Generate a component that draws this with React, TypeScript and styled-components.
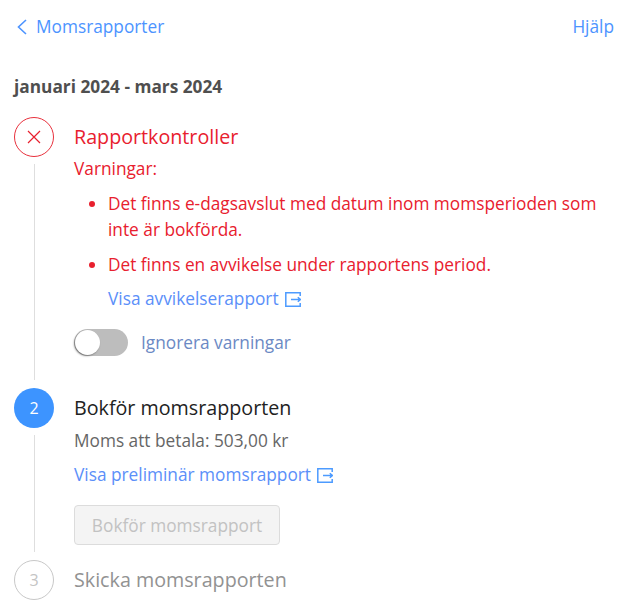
import React from 'react';
import styled, { createGlobalStyle } from 'styled-components';

const GlobalStyle = createGlobalStyle`
  html, body {
    margin: 0;
    padding: 0;
    background: #fff;
    font-family: "Open Sans", "Liberation Sans", sans-serif;
    font-size: 17.28px;
  }
`;

const Page = styled.div`
  width: 625px;
  height: 609px;
  overflow: hidden;
  box-sizing: border-box;
  padding: 16px 11px 0 14px;
`;

const TopBar = styled.div`
  display: flex;
  justify-content: space-between;
  align-items: center;
  height: 22px;
`;

const BackLink = styled.a`
  display: flex;
  align-items: center;
  gap: 9px;
  color: #4d94ff;
  margin-left: 3px;
  line-height: 22px;
`;

const HelpLink = styled.a`
  color: #4d94ff;
  line-height: 22px;
`;

const Period = styled.h2`
  margin: 38px 0 0;
  font-size: 17.28px;
  line-height: 22px;
  font-weight: 700;
  color: #4f4f4f;
`;

const StepList = styled.div`
  display: flex;
  flex-direction: column;
  margin-top: 19px;
`;

const Step = styled.section`
  display: flex;
  gap: 20px;
`;

const Rail = styled.div`
  display: flex;
  flex-direction: column;
  align-items: center;
  width: 40px;
  flex: none;
`;

type BadgeKind = 'error' | 'active' | 'pending';

const Badge = styled.div<{ $kind: BadgeKind }>`
  width: 40px;
  height: 40px;
  flex: none;
  box-sizing: border-box;
  border-radius: 50%;
  display: flex;
  align-items: center;
  justify-content: center;
  font-size: 16px;
  background: ${p => (p.$kind === 'active' ? '#3d94ff' : '#fff')};
  color: ${p => (p.$kind === 'active' ? '#fff' : p.$kind === 'error' ? '#e8202e' : '#c4c4c4')};
  border: ${p =>
    p.$kind === 'error' ? '1px solid #e8303c' : p.$kind === 'pending' ? '1px solid #c8c8c8' : 'none'};
`;

const RailLine = styled.div`
  flex: 1;
  width: 1px;
  background: #dedede;
  margin: 7px 0 8px;
`;

const StepBody = styled.div`
  flex: 1;
  min-width: 0;
  padding-top: 8px;
`;

const StepTitle = styled.h3<{ $tone: 'error' | 'dark' | 'muted' }>`
  margin: 0;
  font-size: 19.7px;
  line-height: 24px;
  font-weight: 400;
  color: ${p => (p.$tone === 'error' ? '#e8202e' : p.$tone === 'dark' ? '#222' : '#929292')};
`;

const WarningLabel = styled.div`
  margin-top: 9px;
  line-height: 22px;
  color: #e8202e;
`;

const WarningList = styled.ul`
  margin: 11px 0 0;
  padding: 0 0 0 34px;
  color: #e8202e;
  line-height: 26px;

  li + li {
    margin-top: 9px;
  }
`;

const ReportLink = styled.a<{ $indented?: boolean }>`
  display: flex;
  align-items: center;
  gap: 6px;
  width: fit-content;
  color: #5b8ff9;
  line-height: 22px;
  margin-left: ${p => (p.$indented ? '34px' : '0')};
  margin-top: ${p => (p.$indented ? '10px' : '12px')};
`;

const ToggleRow = styled.div`
  display: flex;
  align-items: center;
  gap: 13px;
  margin-top: 19px;
  margin-bottom: 32px;
`;

const Toggle = styled.div`
  position: relative;
  width: 54px;
  height: 27px;
  border-radius: 14px;
  background: #bdbdbd;
`;

const ToggleKnob = styled.span`
  position: absolute;
  left: 1px;
  top: 1px;
  width: 25px;
  height: 25px;
  border-radius: 50%;
  background: #fff;
  box-shadow: -1px 1px 2px rgba(0, 0, 0, 0.4);
`;

const ToggleLabel = styled.span`
  color: #6b89c4;
  line-height: 22px;
`;

const Amount = styled.div`
  margin-top: 10px;
  line-height: 22px;
  color: #666;
`;

const PostButton = styled.button`
  display: block;
  width: 206px;
  height: 40px;
  margin: 19px 0 15px;
  padding: 0;
  box-sizing: border-box;
  font-family: inherit;
  font-size: 17.28px;
  color: #c2c2c2;
  background: #f4f4f4;
  border: 1px solid #dcdcdc;
  border-radius: 4px;
`;

const ExternalIcon = () => (
  <svg width="16" height="15" viewBox="0 0 16 15" fill="none" stroke="#4d9bff" strokeWidth="1.5">
    <path d="M15.2 4V.8H.8v13.4h14.4V11" />
    <path d="M6 7.5h9.5M12.8 5.2l2.5 2.3-2.5 2.3" />
  </svg>
);

export default function App() {
  return (
    <Page>
      <GlobalStyle />
      <TopBar>
        <BackLink>
          <svg width="10" height="16" viewBox="0 0 10 16" fill="none" stroke="#4d94ff" strokeWidth="1.6">
            <path d="M9 1L1.5 8 9 15" />
          </svg>
          Momsrapporter
        </BackLink>
        <HelpLink>Hjälp</HelpLink>
      </TopBar>
      <Period>januari 2024 - mars 2024</Period>
      <StepList>
        <Step>
          <Rail>
            <Badge $kind="error">
              <svg width="14" height="14" viewBox="0 0 14 14" fill="none" stroke="#e8202e" strokeWidth="1.2">
                <path d="M1 1l12 12M13 1L1 13" />
              </svg>
            </Badge>
            <RailLine />
          </Rail>
          <StepBody>
            <StepTitle $tone="error">Rapportkontroller</StepTitle>
            <WarningLabel>Varningar:</WarningLabel>
            <WarningList>
              <li>Det finns e-dagsavslut med datum inom momsperioden som inte är bokförda.</li>
              <li>Det finns en avvikelse under rapportens period.</li>
            </WarningList>
            <ReportLink $indented>
              Visa avvikelserapport <ExternalIcon />
            </ReportLink>
            <ToggleRow>
              <Toggle>
                <ToggleKnob />
              </Toggle>
              <ToggleLabel>Ignorera varningar</ToggleLabel>
            </ToggleRow>
          </StepBody>
        </Step>
        <Step>
          <Rail>
            <Badge $kind="active">2</Badge>
            <RailLine />
          </Rail>
          <StepBody>
            <StepTitle $tone="dark">Bokför momsrapporten</StepTitle>
            <Amount>Moms att betala: 503,00 kr</Amount>
            <ReportLink>
              Visa preliminär momsrapport <ExternalIcon />
            </ReportLink>
            <PostButton disabled>Bokför momsrapport</PostButton>
          </StepBody>
        </Step>
        <Step>
          <Rail>
            <Badge $kind="pending">3</Badge>
          </Rail>
          <StepBody>
            <StepTitle $tone="muted">Skicka momsrapporten</StepTitle>
          </StepBody>
        </Step>
      </StepList>
    </Page>
  );
}
